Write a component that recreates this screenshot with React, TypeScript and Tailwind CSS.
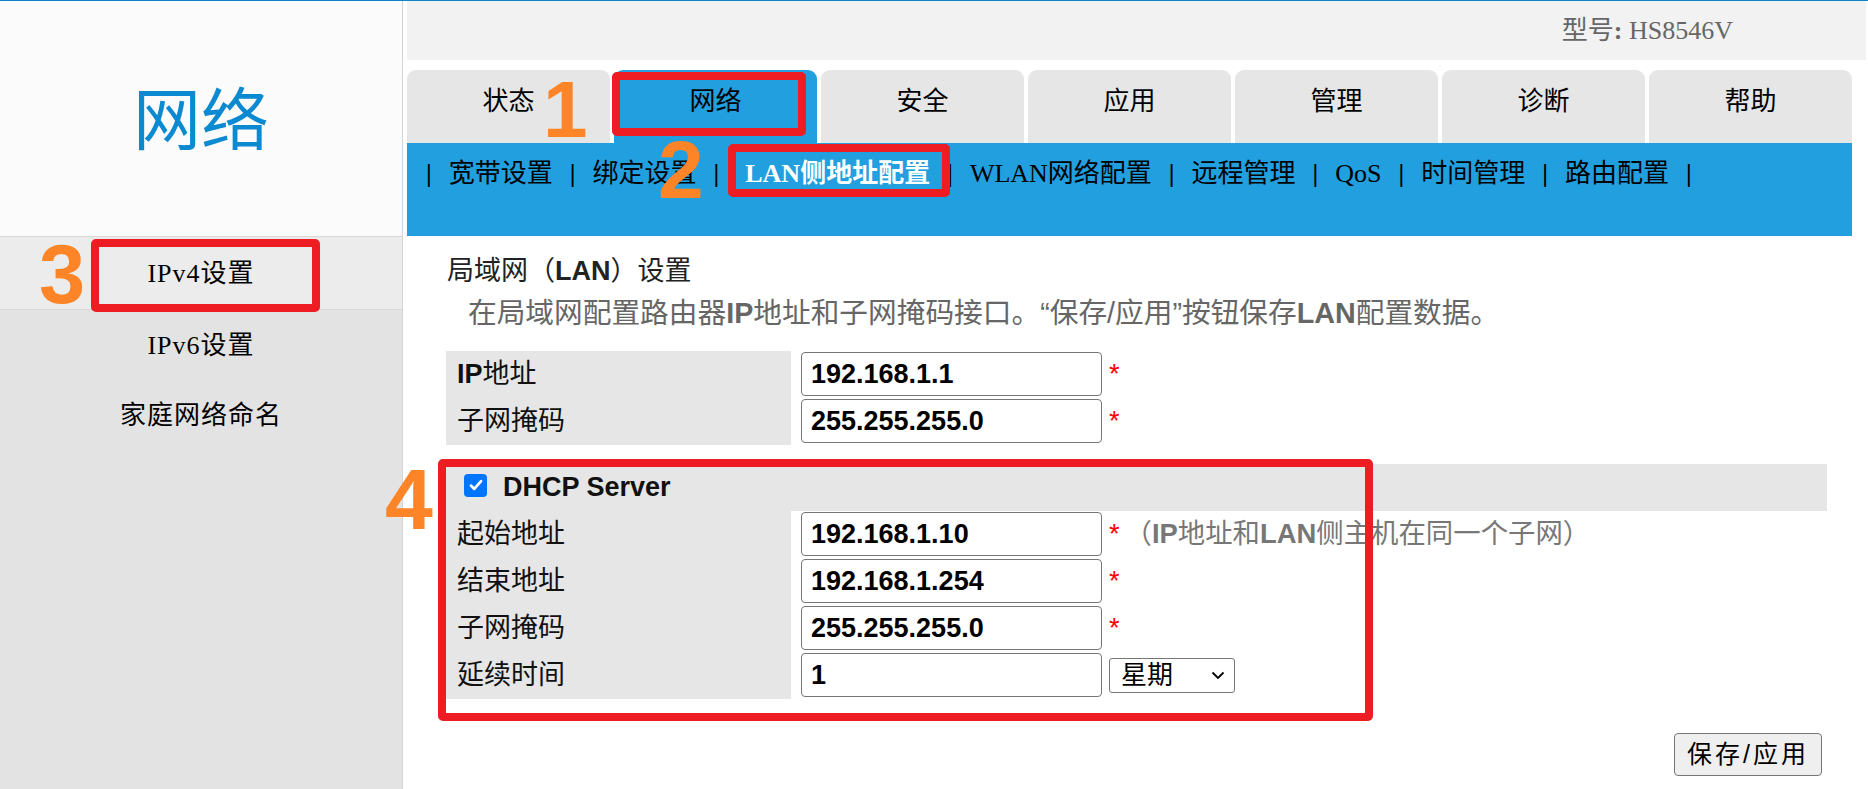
import React from 'react';

const tabs = ['状态', '网络', '安全', '应用', '管理', '诊断', '帮助'];
const subNav = ['宽带设置', '绑定设置', 'LAN侧地址配置', 'WLAN网络配置', '远程管理', 'QoS', '时间管理', '路由配置'];

function Star() {
  return <span className="ml-[7px] text-[27px] leading-none text-[#ff0000]">*</span>;
}

function FormRow({
  label,
  value,
  star = true,
  children,
}: {
  label: React.ReactNode;
  value: string;
  star?: boolean;
  children?: React.ReactNode;
}) {
  return (
    <div className="flex h-[47px]">
      <div className="flex w-[345px] items-center bg-[#e6e6e6] pl-[11px] text-[27px] text-[#111]">{label}</div>
      <div className="ml-[10px] mt-[1px] flex h-[44px] items-center self-start">
        <div className="flex h-[44px] w-[301px] items-center rounded-[4px] border border-[#767676] bg-white pl-[9px] text-[27px] font-bold text-black">
          {value}
        </div>
        {star && <Star />}
        {children}
      </div>
    </div>
  );
}

export default function App() {
  return (
    <div className="relative h-[789px] w-[1868px] overflow-hidden bg-white font-['Liberation_Sans','Noto_Sans_CJK_SC',sans-serif]">
      <div className="h-px bg-[#0a84c8]" />
      <div className="flex h-[788px]">
        {/* left menu */}
        <aside className="flex w-[403px] flex-col border-r border-[#d4d4d4] bg-[#e3e3e3] font-['Liberation_Serif','Noto_Sans_CJK_SC',serif]">
          <div className="flex h-[235px] items-center justify-center bg-[#fbfbfb] pb-[6px]">
            <span className="font-['Noto_Sans_CJK_SC',sans-serif] text-[68px] leading-none text-[#0b89d1]">网络</span>
          </div>
          <div className="flex h-[74px] items-center justify-center border-y border-[#d8d8d8] bg-[#ececec] text-[26px] tracking-[1px] text-black">
            IPv4设置
          </div>
          <div className="flex h-[70px] items-center justify-center text-[26px] tracking-[1px] text-black">IPv6设置</div>
          <div className="flex h-[70px] items-center justify-center text-[26px] tracking-[1px] text-black">家庭网络命名</div>
        </aside>

        <main className="ml-[4px] flex-1">
          {/* header */}
          <div className="mr-[2px] flex h-[59px] items-center justify-end bg-[#f2f2f2] pr-[133px] font-['Liberation_Serif','Noto_Sans_CJK_SC',serif] text-[26px] text-[#666]">
            <span>
              型号<b>:</b> HS8546V
            </span>
          </div>

          {/* tabs */}
          <div className="mt-[10px] flex w-[1445px] gap-[4px] font-['Liberation_Serif','Noto_Sans_CJK_SC',serif]">
            {tabs.map((t) => (
              <div
                key={t}
                className={
                  t === '网络'
                    ? 'flex h-[73px] w-[203px] justify-center rounded-t-[9px] bg-[#229fdf] pt-[16px] text-[26px] leading-[31px] text-black'
                    : 'flex h-[73px] w-[203px] justify-center rounded-t-[9px] bg-[#e6e6e6] pt-[16px] text-[26px] leading-[31px] text-black'
                }
              >
                {t}
              </div>
            ))}
          </div>

          {/* sub nav */}
          <div className="flex h-[93px] w-[1445px] items-start gap-[17px] bg-[#229fdf] pl-[19px] pt-[16px] font-['Liberation_Serif','Noto_Sans_CJK_SC',serif] text-[26px] leading-[30px] text-black">
            <span className="font-bold">|</span>
            {subNav.map((s) => (
              <React.Fragment key={s}>
                <span className={s === 'LAN侧地址配置' ? 'ml-[9px] font-bold text-white' : ''}>{s}</span>
                <span className="font-bold">|</span>
              </React.Fragment>
            ))}
          </div>

          {/* content */}
          <section className="w-[1420px] pl-[39px]">
            <h2 className="mt-[17px] pl-[1px] text-[27px] leading-[36px] text-[#222]">
              局域网（<b>LAN</b>）设置
            </h2>
            <p className="mt-[6px] pl-[22px] text-[28.7px] leading-[36px] text-[#666]">
              在局域网配置路由器<b>IP</b>地址和子网掩码接口。“保存/应用”按钮保存<b>LAN</b>配置数据。
            </p>

            <div className="mt-[20px]">
              <FormRow
                label={
                  <span>
                    <b>IP</b>地址
                  </span>
                }
                value="192.168.1.1"
              />
              <FormRow label="子网掩码" value="255.255.255.0" />
            </div>

            {/* DHCP */}
            <div className="mt-[19px] flex h-[47px] items-center bg-[#e6e6e6] pl-[18px]">
              <div className="-mt-[5px] flex h-[23px] w-[23px] items-center justify-center rounded-[4px] bg-[#0075ff]">
                <svg viewBox="0 0 16 16" className="h-[18px] w-[18px]">
                  <path d="M3.5 8.5l3 3 6-7" fill="none" stroke="white" strokeWidth="2.4" strokeLinecap="round" strokeLinejoin="round" />
                </svg>
              </div>
              <span className="ml-[16px] text-[27px] font-bold text-[#111]">DHCP Server</span>
            </div>
            <FormRow label="起始地址" value="192.168.1.10">
              <span className="ml-[5px] text-[27.4px] text-[#777]">
                （<b>IP</b>地址和<b>LAN</b>侧主机在同一个子网）
              </span>
            </FormRow>
            <FormRow label="结束地址" value="192.168.1.254" />
            <FormRow label="子网掩码" value="255.255.255.0" />
            <FormRow label="延续时间" value="1" star={false}>
              <div className="ml-[7px] flex h-[35px] w-[126px] items-center justify-between rounded-[3px] border border-[#767676] bg-white pl-[11px] pr-[9px] font-['Liberation_Serif','Noto_Sans_CJK_SC',serif] text-[26px] text-black">
                <span>星期</span>
                <svg viewBox="0 0 14 9" className="h-[9px] w-[14px]">
                  <path d="M1.5 1.5l5.5 5.5 5.5-5.5" fill="none" stroke="black" strokeWidth="1.8" />
                </svg>
              </div>
            </FormRow>

            <div className="mt-[34px] flex justify-end pr-[5px]">
              <button className="h-[43px] w-[148px] rounded-[4px] border border-[#767676] bg-[#efefef] text-[25px] tracking-[3px] text-black">
                保存/应用
              </button>
            </div>
          </section>
        </main>
      </div>

      {/* annotations */}
      <div className="absolute left-[612px] top-[72px] h-[64px] w-[194px] rounded-[5px] border-[8px] border-[#ee1d23]" />
      <div className="absolute left-[728px] top-[144px] h-[53px] w-[222px] rounded-[5px] border-[8px] border-[#ee1d23]" />
      <div className="absolute left-[91px] top-[239px] h-[73px] w-[229px] rounded-[5px] border-[8px] border-[#ee1d23]" />
      <div className="absolute left-[438px] top-[459px] h-[262px] w-[935px] rounded-[5px] border-[8px] border-[#ee1d23]" />

      <span className="absolute left-[543px] top-[70px] text-[80px] font-bold leading-none text-[#fe8527]">1</span>
      <span className="absolute left-[658px] top-[129px] text-[82px] font-bold leading-none text-[#fe8527]">2</span>
      <span className="absolute left-[39px] top-[233px] text-[83px] font-bold leading-none text-[#fe8527]">3</span>
      <span className="absolute left-[385px] top-[456px] text-[86px] font-bold leading-none text-[#fe8527]">4</span>
    </div>
  );
}
